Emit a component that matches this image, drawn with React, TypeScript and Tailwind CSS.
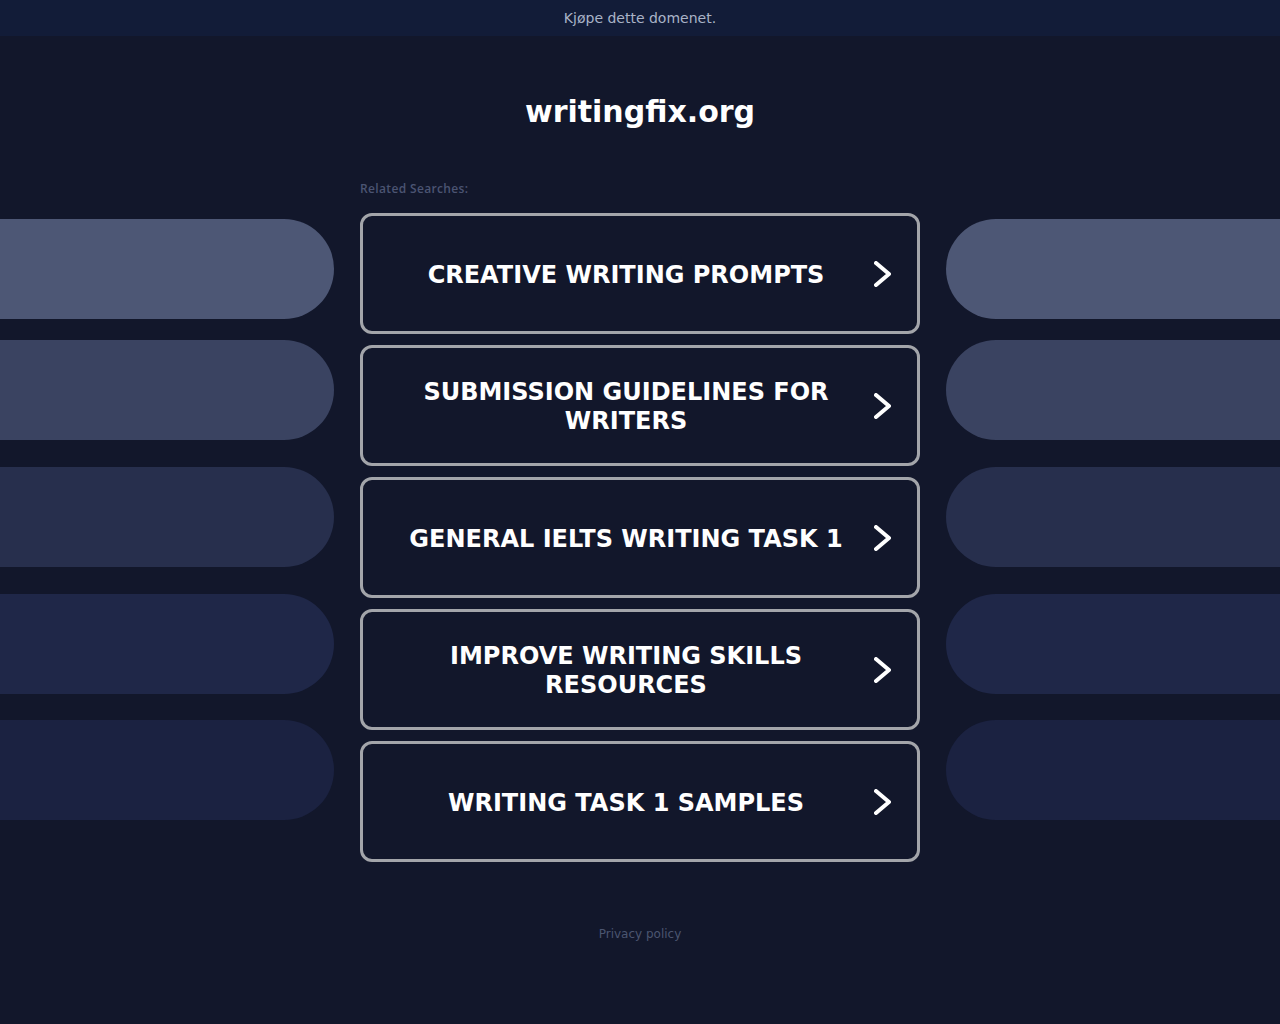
import React from 'react';

const searches = [
  'Creative Writing Prompts',
  'Submission Guidelines for Writers',
  'General IELTS Writing Task 1',
  'Improve Writing Skills Resources',
  'Writing Task 1 Samples',
];

// decorative side pills, top-to-bottom
const pills = [
  { bg: 'bg-[#4d5775]', mt: 'mt-[6px]' },
  { bg: 'bg-[#3a4361]', mt: 'mt-[21px]' },
  { bg: 'bg-[#272f4d]', mt: 'mt-[27px]' },
  { bg: 'bg-[#1f2748]', mt: 'mt-[27px]' },
  { bg: 'bg-[#1b2241]', mt: 'mt-[26px]' },
];

const Chevron = () => (
  <svg width="17" height="26" viewBox="0 0 17 26" fill="none">
    <polyline points="2,2 15,13 2,24" stroke="#ffffff" strokeWidth="4" strokeLinecap="round" strokeLinejoin="round" />
  </svg>
);

const SidePills: React.FC<{ side: 'left' | 'right' }> = ({ side }) => (
  <div className="w-[334px] shrink-0 flex flex-col">
    {pills.map((p, i) => (
      <div
        key={i}
        className={`h-[100px] ${p.bg} ${p.mt} ${side === 'left' ? 'rounded-r-[50px]' : 'rounded-l-[50px]'}`}
      ></div>
    ))}
  </div>
);

export default function App() {
  return (
    <div className="min-h-[1024px] w-full bg-[#12172b] font-['DejaVu_Sans',sans-serif]">
      {/* --- TOP BAR --- */}
      <div className="h-[36px] bg-[#121c38] flex items-center justify-center">
        <span className="text-[14px] text-[#a9b3c7]">Kjøpe dette domenet.</span>
      </div>

      {/* --- TITLE --- */}
      <h1 className="mt-[57px] text-center text-[30px] leading-[38px] font-bold text-white">writingfix.org</h1>

      {/* --- MAIN ROW --- */}
      <div className="mt-[50px] flex gap-[26px]">
        <div className="pt-[32px]">
          <SidePills side="left" />
        </div>

        <div className="w-[560px] shrink-0">
          <div className="h-[14px] mt-[1px] text-[12px] leading-[14px] text-[#4b5472] font-['Open_Sans',sans-serif] font-semibold tracking-[0.35px]">
            Related Searches:
          </div>
          <div className="mt-[17px] flex flex-col gap-[11px]">
            {searches.map((s) => (
              <div
                key={s}
                className="h-[121px] border-[3px] border-[#a3a5aa] rounded-[12px] flex items-center pl-[36px] pr-[26px]"
              >
                <span className="flex-1 pt-[3px] text-center text-[24px] leading-[29px] font-bold text-white uppercase">
                  {s}
                </span>
                <span className="w-[38px] flex justify-end">
                  <Chevron />
                </span>
              </div>
            ))}
          </div>
        </div>

        <div className="pt-[32px]">
          <SidePills side="right" />
        </div>
      </div>

      {/* --- FOOTER --- */}
      <div className="mt-[63px] text-center text-[12px] text-[#4b5570]">Privacy policy</div>
    </div>
  );
}
